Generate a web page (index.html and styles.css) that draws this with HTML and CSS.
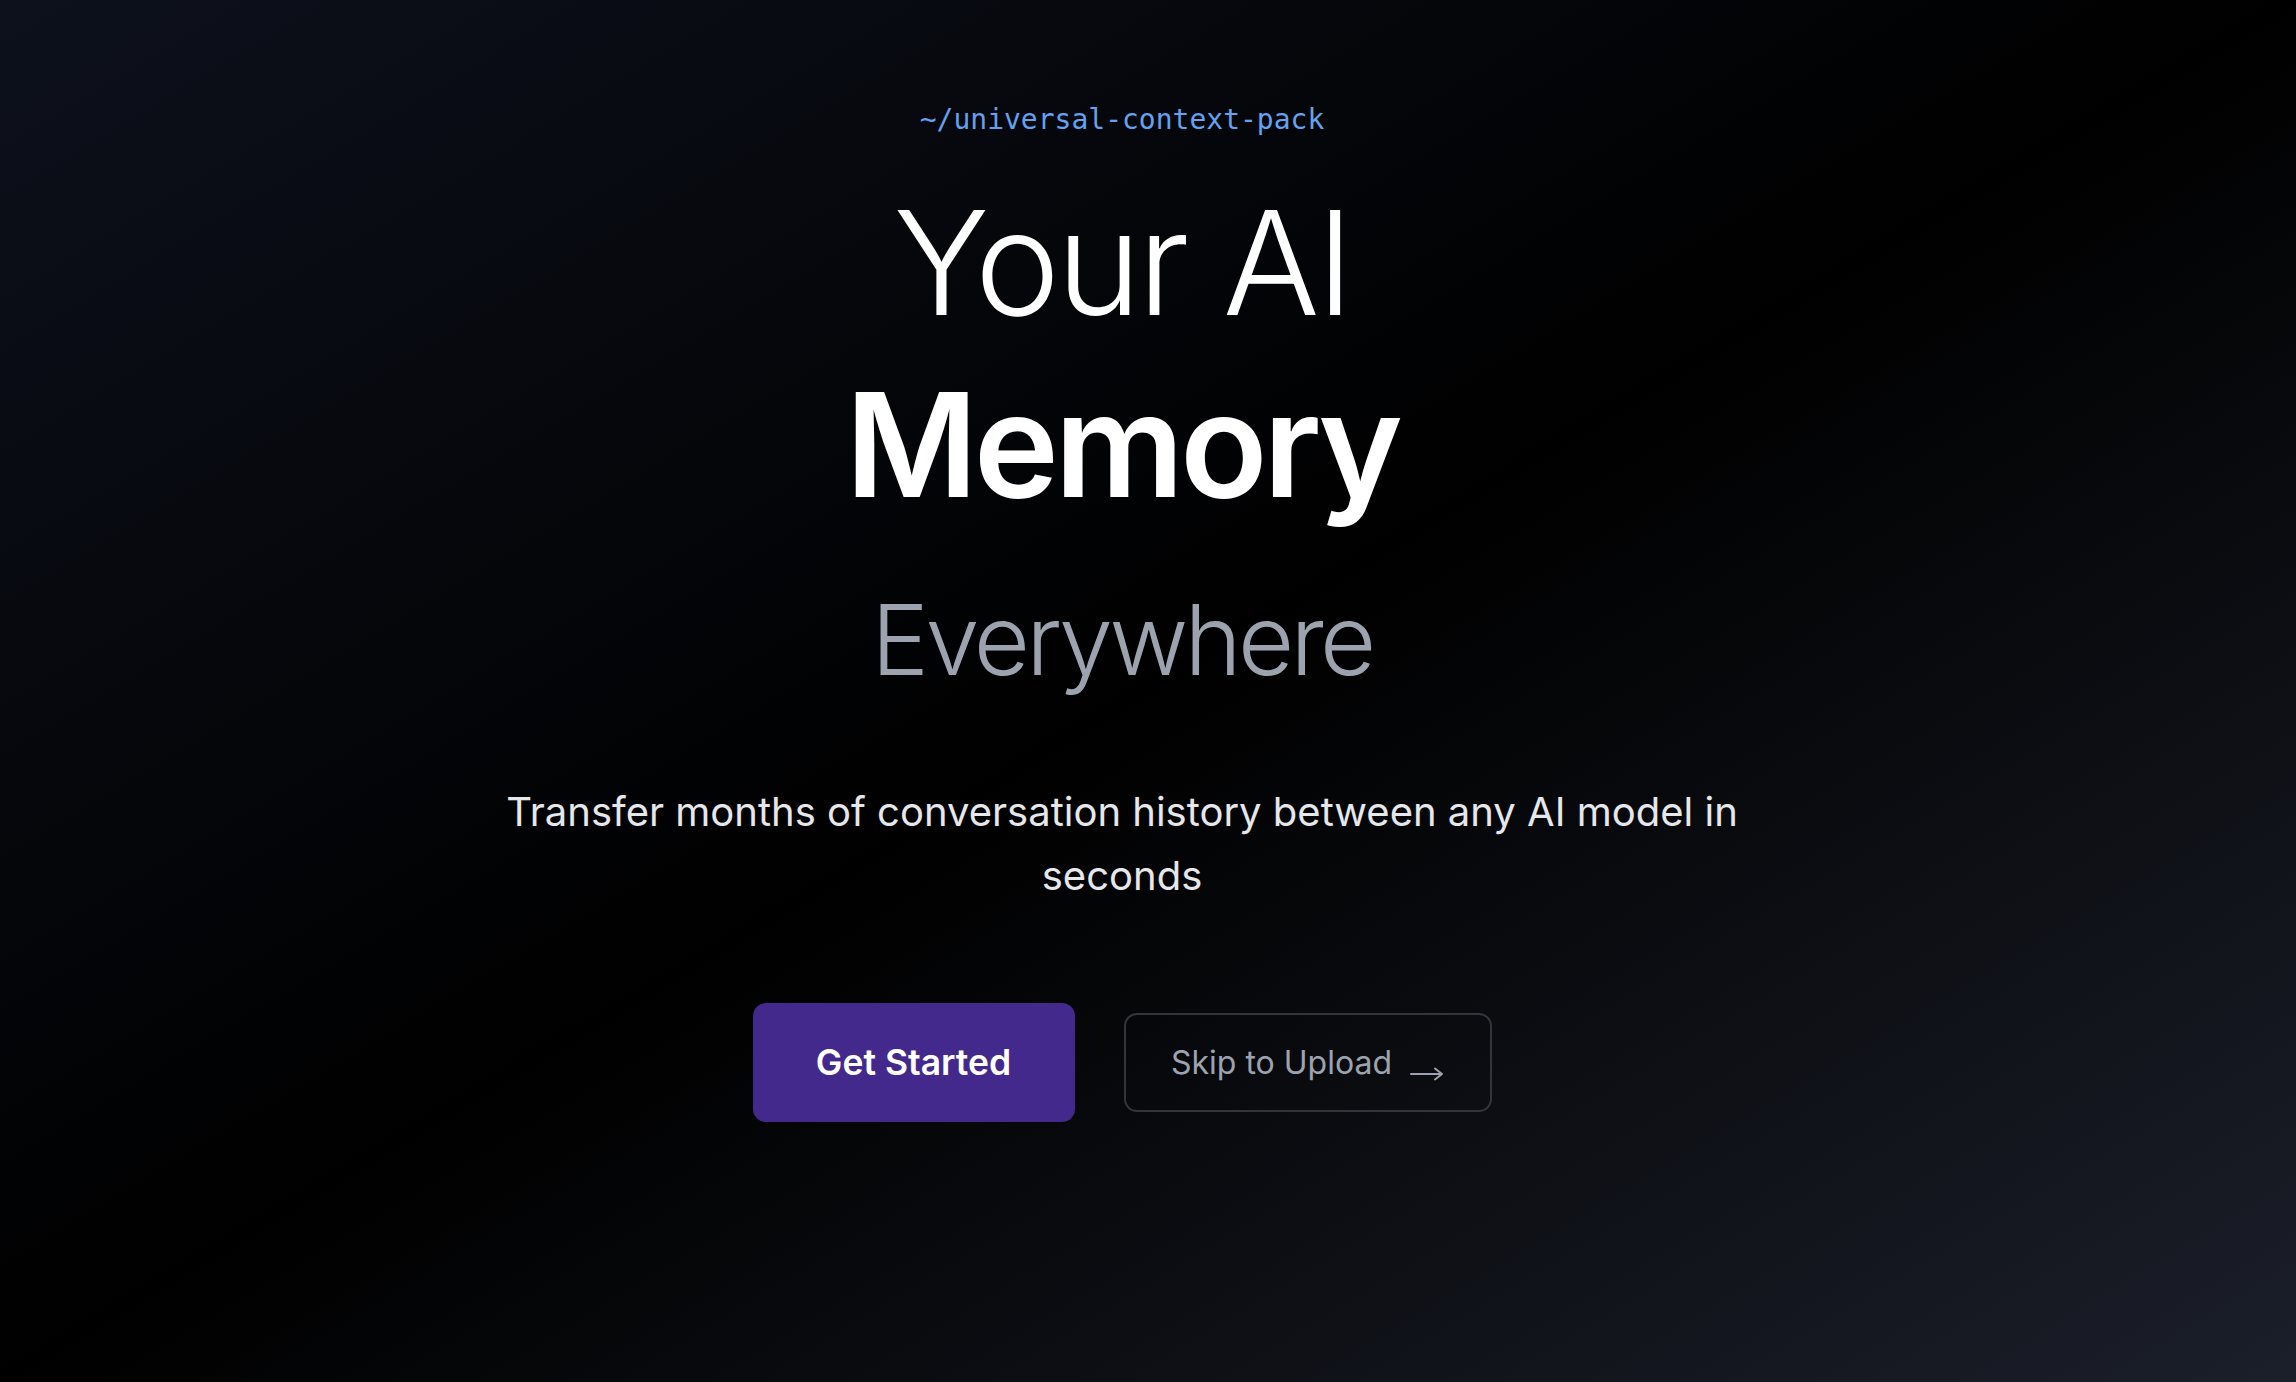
FILE: index.html
```html
<!DOCTYPE html>
<html lang="en">
<head>
<meta charset="utf-8">
<title>Universal Context Pack</title>
<link rel="stylesheet" href="styles.css">
</head>
<body>
<main class="page">
  <section class="hero">
    <p class="path">~/universal-context-pack</p>
    <h1 class="title">
      <span class="title-light">Your AI</span>
      <span class="title-bold">Memory</span>
    </h1>
    <p class="subtitle">Everywhere</p>
    <p class="lead">Transfer months of conversation history between any AI model in seconds</p>
    <div class="actions">
      <button class="btn btn-primary">Get Started</button>
      <button class="btn btn-ghost">Skip to Upload
        <svg class="arrow" width="34" height="14" viewBox="0 0 34 14" fill="none" stroke="currentColor" stroke-width="2" stroke-linecap="round" stroke-linejoin="round"><path d="M1 7H32M25 1.5L32 7L25 12.5"/></svg>
      </button>
    </div>
  </section>
</main>
</body>
</html>
```
FILE: styles.css
```css
* { box-sizing: border-box; }
html, body { margin: 0; padding: 0; }
body {
  min-height: 1382px;
  background: linear-gradient(to bottom right, #0d111c 0%, #000000 50%, #1b1f2a 100%);
  font-family: "Inter", "Noto Sans", sans-serif;
  color: #fff;
}
.page {
  min-height: 1382px;
  padding-right: 52px;
  display: flex;
  justify-content: center;
}
.hero {
  display: flex;
  flex-direction: column;
  align-items: center;
  text-align: center;
  padding-top: 99px;
}
.path {
  margin: 0;
  font-family: "DejaVu Sans Mono", "Liberation Mono", monospace;
  font-size: 28px;
  line-height: 42px;
  color: #62a2f0;
}
.title {
  margin: 31px 0 0;
  display: flex;
  flex-direction: column;
  align-items: center;
  font-size: 144px;
  line-height: 182px;
  letter-spacing: -0.025em;
}
.title-light { font-weight: 300; }
.title-bold { font-weight: 600; letter-spacing: -0.03em; }
.subtitle {
  margin: 44px 0 0;
  font-size: 97px;
  line-height: 120px;
  font-weight: 300;
  color: #9ca3af;
  letter-spacing: -0.038em;
}
.lead {
  margin: 80px 0 0;
  max-width: 1310px;
  font-size: 40px;
  line-height: 64px;
  color: #e5e7eb;
}
.actions {
  margin-top: 95px;
  display: flex;
  align-items: center;
  gap: 49px;
}
.btn {
  font-family: "Inter", "Noto Sans", sans-serif;
  border-radius: 13px;
  cursor: pointer;
  display: flex;
  align-items: center;
  justify-content: center;
}
.btn-primary {
  width: 322px;
  height: 119px;
  background: #43298b;
  border: none;
  color: #fff;
  font-size: 35.5px;
  font-weight: 600;
}
.btn-ghost {
  width: 368px;
  height: 99px;
  background: transparent;
  border: 2px solid #33353b;
  color: #9ca3af;
  font-size: 32px;
  font-weight: 400;
  gap: 18px;
}
.arrow {
  margin-top: 22px;
}
```
